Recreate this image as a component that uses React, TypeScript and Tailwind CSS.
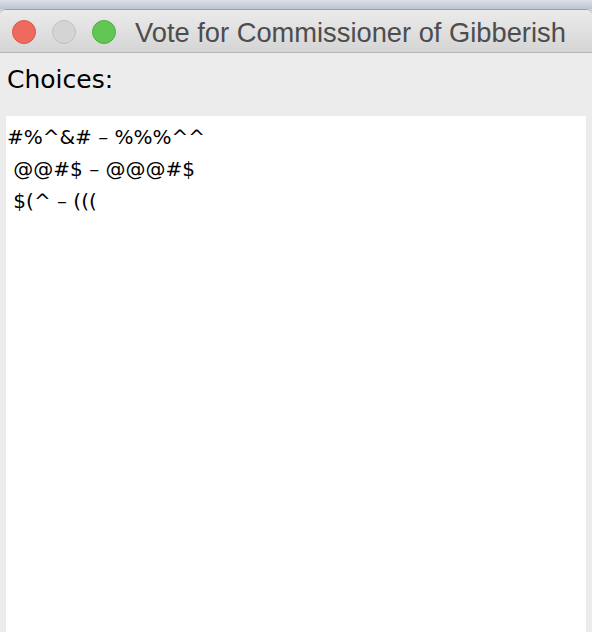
import React from "react";

export default function App() {
  return (
    <div className="w-[592px] h-[632px] overflow-hidden bg-[#cdd5e0] flex flex-col" style={{ fontFamily: '"DejaVu Sans", sans-serif' }}>
      <div className="h-[9px] shrink-0 bg-gradient-to-b from-[#dbe1e9] to-[#bcc5d2]" />
      <div className="flex-1 flex flex-col rounded-t-[6px] overflow-hidden bg-[#ececec] border-t border-[#9a9ea6]">
        <div className="h-[43px] shrink-0 flex items-center bg-gradient-to-b from-[#ebebeb] to-[#d5d5d5] border-b border-[#b5b5b5]">
          <div className="flex items-center gap-[16px] pl-[12px] pt-[1px]">
            <span className="w-[24px] h-[24px] rounded-full bg-[#ee6a5e] border border-[#d8564b]" />
            <span className="w-[24px] h-[24px] rounded-full bg-[#d4d4d4] border border-[#c2c2c2]" />
            <span className="w-[24px] h-[24px] rounded-full bg-[#62c654] border border-[#52ad45]" />
          </div>
          <span className="ml-[19px] pt-[3px] text-[27.3px] text-[#4d4d4d] leading-none" style={{ fontFamily: '"Liberation Sans", Arial, sans-serif' }}>
            Vote for Commissioner of Gibberish
          </span>
        </div>
        <div className="px-[7px] pt-[14px] text-[25px] leading-none text-black">Choices:</div>
        <div className="flex-1 mt-[24px] ml-[6px] mr-[6px] bg-white pt-[5px] pl-[1px] text-[20px] leading-[32px] text-black whitespace-pre">
          <div>#%^&amp;# – %%%^^</div>
          <div> @@#$ – @@@#$</div>
          <div> $(^ – (((</div>
        </div>
      </div>
    </div>
  );
}
